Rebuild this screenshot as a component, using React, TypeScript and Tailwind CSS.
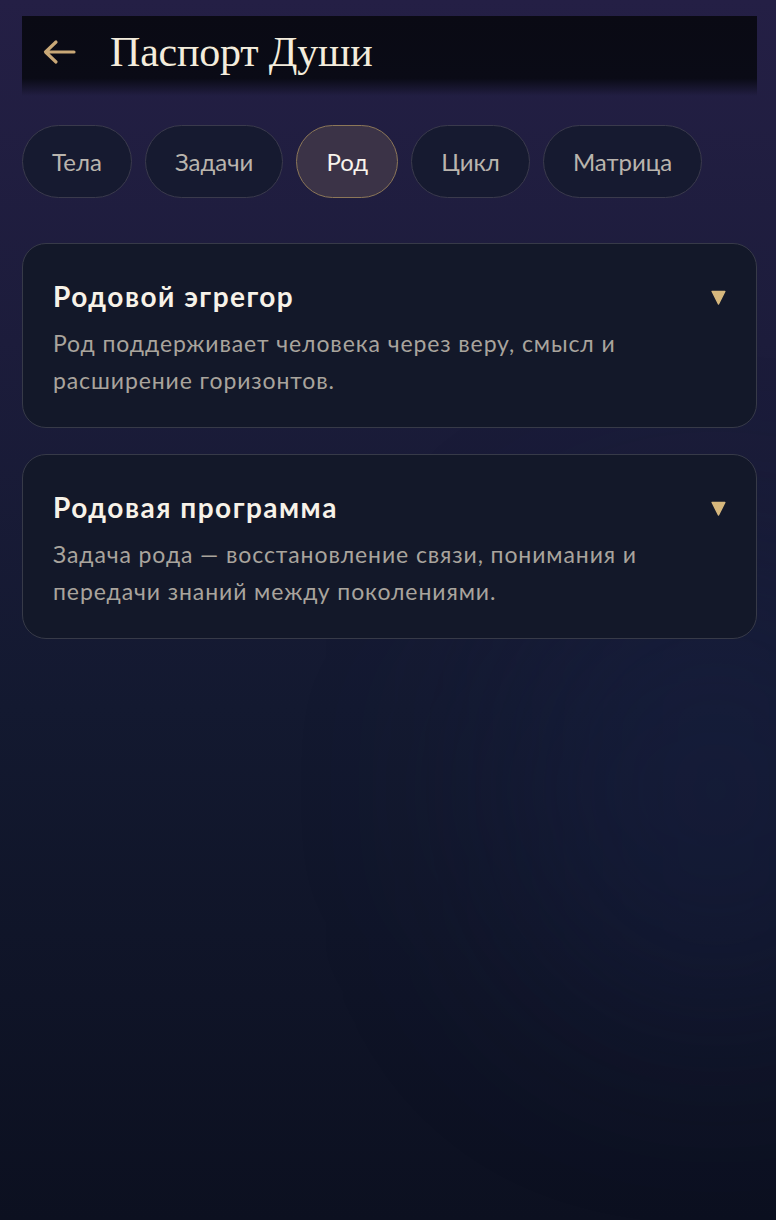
import { useState } from 'react';

const tabs = ['Тела', 'Задачи', 'Род', 'Цикл', 'Матрица'];

const sections = [
  {
    title: 'Родовой эгрегор',
    text: 'Род поддерживает человека через веру, смысл и расширение горизонтов.',
  },
  {
    title: 'Родовая программа',
    text: 'Задача рода — восстановление связи, понимания и передачи знаний между поколениями.',
  },
];

const sans = "font-['Lato','Noto_Sans',sans-serif]";

export default function App() {
  const [active, setActive] = useState('Род');

  return (
    <div
      className={`relative min-h-[1220px] w-full overflow-hidden bg-[linear-gradient(180deg,#241f45_0%,#1c1c3b_28%,#131930_58%,#0c1020_100%)] pl-[22px] pr-[19px] pt-4 ${sans}`}
    >
      {/* soft glow on the right */}
      <div className="pointer-events-none absolute right-[-140px] top-[560px] h-[460px] w-[400px] rounded-full bg-[#1b2350]/30 blur-[100px]" />

      <div className="relative">
        {/* header */}
        <header className="flex h-[80px] items-center gap-[34px] bg-[linear-gradient(180deg,#0a0a14_0%,#0a0b16_78%,rgba(10,11,22,0)_100%)] pb-2 pl-[20px]">
          <button className="text-[#c9a877]">
            <svg width="34" height="26" viewBox="0 0 34 26" fill="none">
              <path
                d="M32 13H4M14 3L3.5 13L14 23"
                stroke="currentColor"
                strokeWidth="3.2"
                strokeLinecap="round"
                strokeLinejoin="round"
              />
            </svg>
          </button>
          <h1 className="font-['Liberation_Serif',serif] text-[42px] leading-none tracking-[-0.2px] text-[#f3ecdc]">
            Паспорт Души
          </h1>
        </header>

        {/* tabs */}
        <nav className="mt-[29px] flex gap-[13px]">
          {tabs.map((t) => {
            const on = t === active;
            return (
              <button
                key={t}
                onClick={() => setActive(t)}
                className={
                  on
                    ? 'h-[73px] rounded-full border border-[#8c7758] bg-[#3b3347] px-[29px] text-[24px] text-[#f8f4ec]'
                    : 'h-[73px] rounded-full border border-[#3a3a4c] bg-[#161a30] px-[29px] text-[24px] text-[#b9b4ad]'
                }
              >
                {t}
              </button>
            );
          })}
        </nav>

        {/* sections */}
        <div className="mt-[45px] flex flex-col gap-[26px]">
          {sections.map((s) => (
            <div
              key={s.title}
              className="rounded-[24px] border border-[#373a48] bg-[#131829] pb-[28px] pl-[30px] pr-[30px] pt-[36px]"
            >
              <div className="flex items-start justify-between">
                <h2 className="text-[28px] font-bold leading-[32px] tracking-[1.5px] text-[#f7f2e8]">{s.title}</h2>
                <svg width="15" height="15" viewBox="0 0 15 15" className="mt-[10px]">
                  <path d="M1.2 1.5H13.8L7.5 14Z" fill="#d6b77d" stroke="#d6b77d" strokeWidth="1.5" strokeLinejoin="round" />
                </svg>
              </div>
              <p className="mt-[13px] max-w-[640px] text-[23px] leading-[37px] tracking-[0.9px] text-[#a9a49d]">{s.text}</p>
            </div>
          ))}
        </div>
      </div>
    </div>
  );
}
